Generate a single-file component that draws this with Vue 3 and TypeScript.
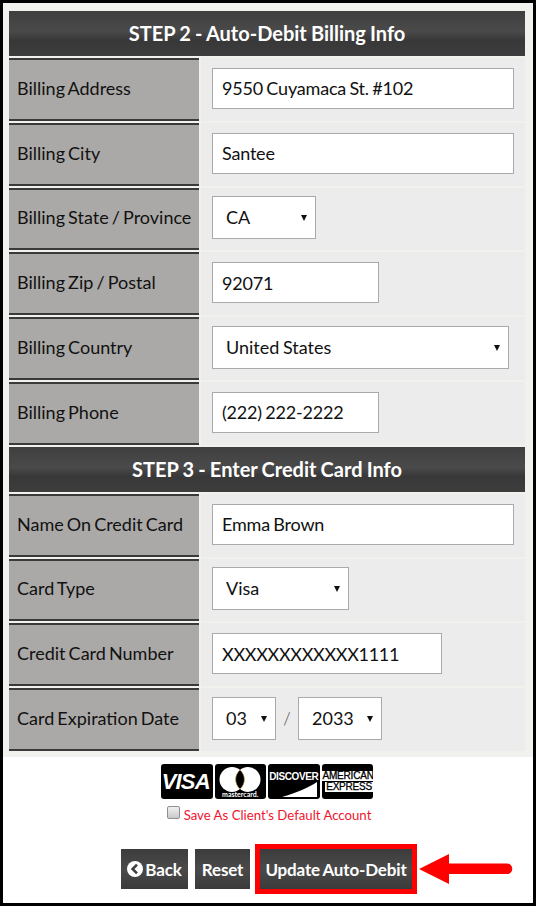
<script setup lang="ts">
interface Field {
  label: string
  value: string
  width: number
  options?: string[]
  tight?: boolean
}

const billing: Field[] = [
  { label: 'Billing Address', value: '9550 Cuyamaca St. #102', width: 302 },
  { label: 'Billing City', value: 'Santee', width: 302 },
  { label: 'Billing State / Province', value: 'CA', width: 104, options: ['CA'] },
  { label: 'Billing Zip / Postal', value: '92071', width: 167 },
  { label: 'Billing Country', value: 'United States', width: 297, options: ['United States'] },
  { label: 'Billing Phone', value: '(222) 222-2222', width: 167 },
]

const card: Field[] = [
  { label: 'Name On Credit Card', value: 'Emma Brown', width: 302 },
  { label: 'Card Type', value: 'Visa', width: 137, options: ['Visa'] },
  { label: 'Credit Card Number', value: 'XXXXXXXXXXXX1111', width: 230, tight: true },
]
</script>

<template>
  <div class="page">
    <div class="panel">
      <h2 class="step">STEP 2 - Auto-Debit Billing Info</h2>
      <div v-for="f in billing" :key="f.label" class="row">
        <div class="label">{{ f.label }}</div>
        <div class="cell">
          <div v-if="f.options" class="select-wrap" :style="{ width: f.width + 'px' }">
            <select class="control select">
              <option v-for="o in f.options" :key="o">{{ o }}</option>
            </select>
          </div>
          <input v-else class="control" type="text" :value="f.value" :style="{ width: f.width + 'px' }" />
        </div>
      </div>

      <h2 class="step">STEP 3 - Enter Credit Card Info</h2>
      <div v-for="f in card" :key="f.label" class="row">
        <div class="label">{{ f.label }}</div>
        <div class="cell">
          <div v-if="f.options" class="select-wrap" :style="{ width: f.width + 'px' }">
            <select class="control select">
              <option v-for="o in f.options" :key="o">{{ o }}</option>
            </select>
          </div>
          <input
            v-else
            class="control"
            :class="{ tight: f.tight }"
            type="text"
            :value="f.value"
            :style="{ width: f.width + 'px' }"
          />
        </div>
      </div>
      <div class="row">
        <div class="label">Card Expiration Date</div>
        <div class="cell">
          <div class="select-wrap month">
            <select class="control select"><option>03</option></select>
          </div>
          <span class="slash">/</span>
          <div class="select-wrap year">
            <select class="control select"><option>2033</option></select>
          </div>
        </div>
      </div>
    </div>

    <div class="footer">
      <div class="cards">
        <div class="pay visa">VISA</div>
        <div class="pay mc">
          <svg width="44" height="25" viewBox="0 0 44 25">
            <circle cx="14" cy="12.5" r="12.5" fill="#fff" />
            <circle cx="30" cy="12.5" r="12.5" fill="#fff" />
            <path d="M22 3a12.5 12.5 0 0 1 0 19a12.5 12.5 0 0 1 0-19z" fill="#000" stroke="#d9a24c" stroke-width=".6" />
          </svg>
          <span>mastercard.</span>
        </div>
        <div class="pay discover">
          <span>DISCOVER</span>
          <svg class="swoosh" width="51" height="35" viewBox="0 0 51 35">
            <path d="M14 33C28 29 40 24 49 18V33z" fill="#fff" />
          </svg>
        </div>
        <div class="pay amex"><span>AMERICAN</span><span class="ex">EXPRESS</span></div>
      </div>
      <label class="save">
        <span class="check"></span>
        <span>Save As Client's Default Account</span>
      </label>
      <div class="actions">
        <button class="btn back" type="button">
          <svg width="16" height="16" viewBox="0 0 16 16">
            <circle cx="8" cy="8" r="8" fill="#fff" />
            <path d="M10 3.6 5.6 8l4.4 4.400" fill="none" stroke="#404040" stroke-width="2.600" />
          </svg>
          Back
        </button>
        <button class="btn reset" type="button">Reset</button>
        <div class="highlight">
          <button class="btn update" type="button">Update Auto-Debit</button>
        </div>
        <svg class="arrow" width="94" height="32" viewBox="0 0 94 32">
          <path d="M0 16 30 1V10.500H88a5.300 5.300 0 0 1 0 10.600H30V31z" fill="#f00" />
        </svg>
      </div>
    </div>
  </div>
</template>

<style>
html,
body {
  margin: 0;
  background: #fff;
}
</style>

<style scoped>
.page {
  box-sizing: border-box;
  width: 536px;
  height: 906px;
  border: 3px solid #000;
  background: #fff;
  font-family: Lato, "Liberation Sans", sans-serif;
  overflow: hidden;
}
.panel {
  display: flex;
  flex-direction: column;
  gap: 2px;
  height: 754px;
  box-sizing: border-box;
  padding: 8px 8px 0 6px;
  background: #f1f1ee;
}
.step {
  margin: 0;
  height: 45px;
  line-height: 44px;
  flex: none;
  text-align: center;
  color: #fff;
  font-size: 20px;
  font-weight: 700;
  word-spacing: -0.700px;
  background: linear-gradient(#3f3f3f 0%, #4a4a4a 45%, #383838 65%, #3d3d3d 100%);
}
.row {
  display: grid;
  grid-template-columns: 190px 1fr;
  gap: 2px;
  height: 62.800px;
  flex: none;
}
.label {
  box-sizing: border-box;
  display: flex;
  align-items: center;
  padding-left: 8px;
  padding-bottom: 3px;
  background: #aba9a7;
  border-top: 2px solid #3a3a3a;
  border-bottom: 2px solid #3a3a3a;
  color: #111;
  font-size: 18px;
  word-spacing: -1.500px;
  white-space: nowrap;
}
.cell {
  display: flex;
  align-items: center;
  padding-left: 11px;
  padding-bottom: 2px;
  background: #ececec;
}
.control {
  box-sizing: border-box;
  height: 41px;
  padding: 0 9px;
  border: 1px solid #aaa;
  border-radius: 0;
  background: #fff;
  color: #111;
  font-family: Lato, "Liberation Sans", sans-serif;
  font-size: 18px;
  word-spacing: -1px;
  letter-spacing: -0.200px;
  outline: none;
}
.tight {
  letter-spacing: -0.300px;
}
.select-wrap {
  position: relative;
  height: 43px;
}
.select-wrap::after {
  content: "";
  position: absolute;
  top: 19px;
  right: 9px;
  border-left: 3px solid transparent;
  border-right: 3px solid transparent;
  border-top: 6px solid #111;
  pointer-events: none;
}
.select {
  width: 100%;
  height: 43px;
  padding: 0 9px 2px 13px;
  letter-spacing: 0;
  appearance: none;
}
.month {
  width: 64px;
}
.year {
  width: 84px;
}
.slash {
  width: 22px;
  text-align: center;
  color: #444;
  font-size: 17px;
  font-weight: 300;
}
.footer {
  display: flex;
  flex-direction: column;
}
.cards {
  display: flex;
  justify-content: center;
  gap: 2px;
  margin-top: 7px;
  padding-right: 2px;
}
.pay {
  position: relative;
  box-sizing: border-box;
  width: 51.500px;
  height: 35px;
  border-radius: 3px;
  background: #000;
  color: #fff;
  overflow: hidden;
  display: flex;
  flex-direction: column;
  align-items: center;
  justify-content: center;
  font-family: "Liberation Sans", sans-serif;
  font-weight: 700;
}
.visa {
  font-size: 22px;
  font-style: italic;
  font-weight: 700;
  letter-spacing: -0.800px;
  padding-right: 2px;
}
.mc {
  justify-content: flex-start;
  padding-top: 3px;
}
.mc span {
  font-size: 7px;
  line-height: 7px;
  margin-top: -1px;
  font-family: Lato, sans-serif;
}
.discover {
  justify-content: flex-start;
  padding-top: 7px;
  font-size: 10px;
  letter-spacing: -0.400px;
}
.discover span {
  position: relative;
  z-index: 1;
}
.swoosh {
  position: absolute;
  left: 0;
  top: 0;
}
.amex {
  align-items: flex-start;
  font-size: 10px;
  line-height: 10px;
  gap: 1px;
  letter-spacing: -0.200px;
  font-weight: 400;
}
.amex span {
  padding: 0 1px;
  background: #fff;
  color: #000;
  -webkit-text-stroke: 0.3px #000;
}
.amex .ex {
  align-self: flex-end;
  margin-right: 0;
}
.save {
  display: flex;
  align-items: flex-start;
  justify-content: center;
  gap: 4px;
  margin-top: 7px;
  padding-left: 2px;
  height: 20px;
  color: #f0142e;
  font-size: 13.200px;
  line-height: 18px;
  white-space: nowrap;
}
.check {
  box-sizing: border-box;
  width: 13px;
  height: 13px;
  border: 1px solid #8f8f8f;
  border-radius: 2px;
  background: linear-gradient(#f0f0f0, #c9c9c9);
}
.actions {
  display: flex;
  align-items: center;
  margin-top: 18px;
  padding-left: 118px;
}
.btn {
  box-sizing: border-box;
  height: 40px;
  padding: 0;
  border: 0;
  background: linear-gradient(#3c3c3c, #4a4a4a 50%, #3a3a3a);
  color: #fff;
  font-family: Lato, sans-serif;
  font-size: 17px;
  font-weight: 700;
  white-space: nowrap;
  word-spacing: -1px;
  letter-spacing: -0.150px;
}
.back {
  width: 67px;
  display: flex;
  align-items: center;
  justify-content: center;
  gap: 2px;
}
.reset {
  width: 55px;
  margin-left: 7px;
}
.highlight {
  margin-left: 5px;
  border: 5px solid #f00;
  line-height: 0;
}
.update {
  display: block;
  width: 152px;
}
.arrow {
  margin-left: 2px;
}
</style>
